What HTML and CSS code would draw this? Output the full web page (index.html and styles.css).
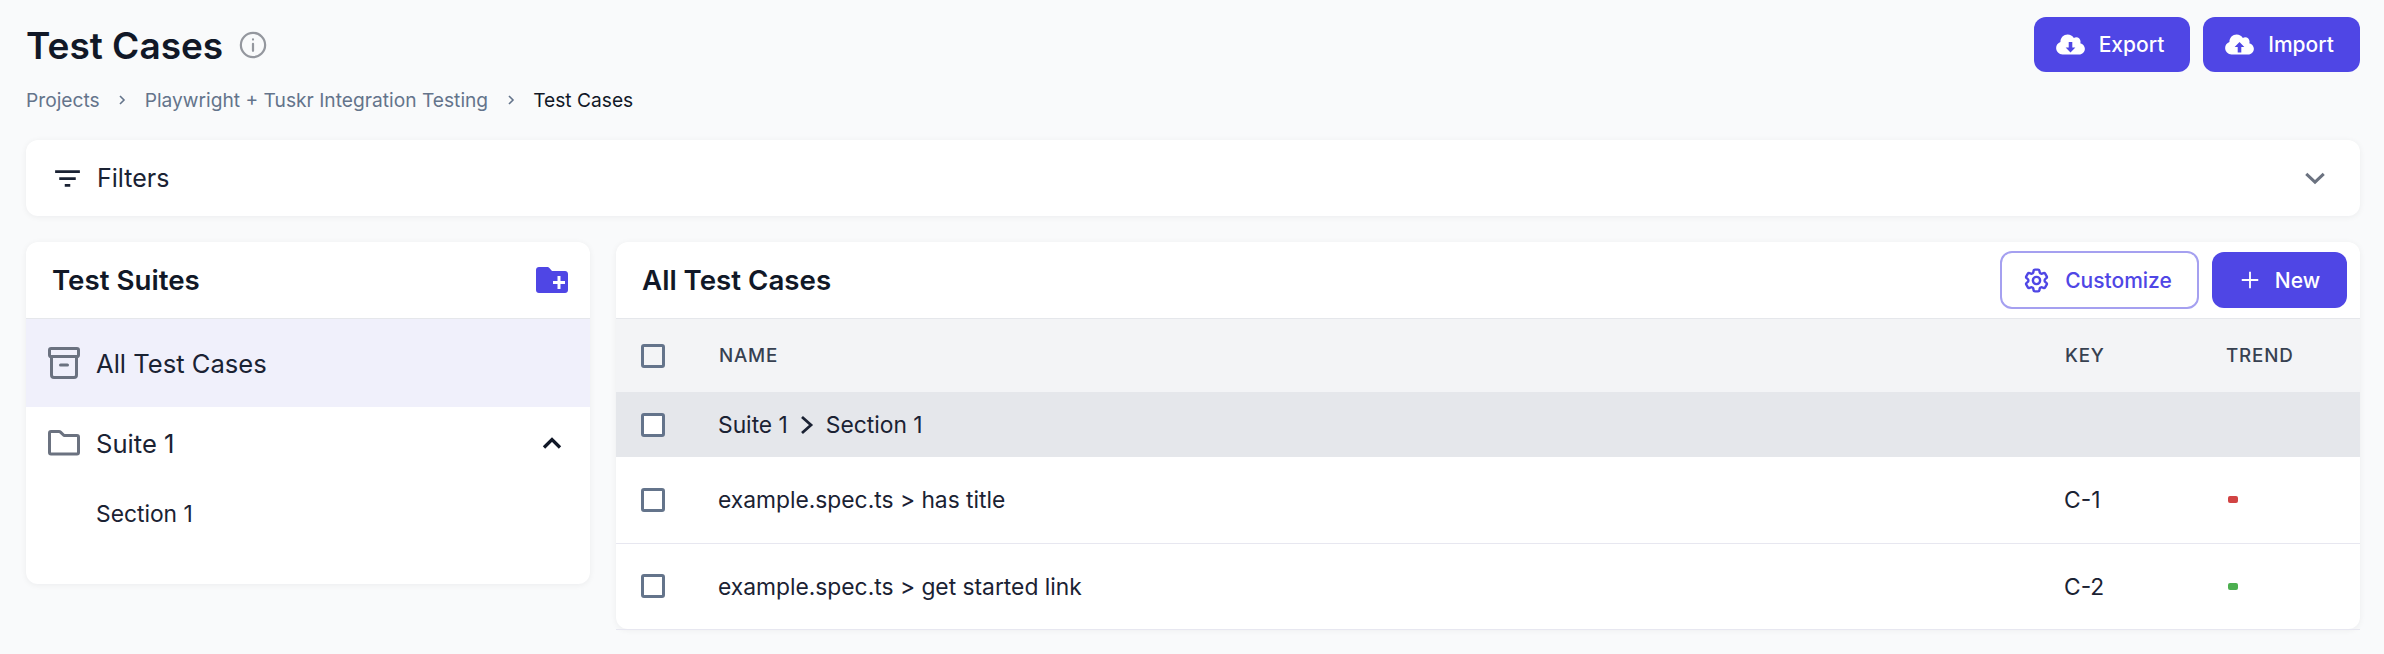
FILE: index.html
```html
<!DOCTYPE html>
<html lang="en">

<head>
    <meta charset="UTF-8">
    <title>Test Cases</title>
    <link rel="stylesheet" href="styles.css">
</head>

<body>

    <header class="page-header">
        <div>
            <div class="title-row">
                <h1>Test Cases</h1>
                <svg class="info-icon" viewBox="0 0 24 24" fill="none" stroke="currentColor" stroke-width="1.9" stroke-linecap="round"><circle cx="12" cy="12" r="10.4"/><path d="M12 11v6M12 7.2v.1"/></svg>
            </div>
            <nav class="breadcrumb">
                <span>Projects</span>
                <svg viewBox="0 0 20 20" fill="none" stroke="currentColor" stroke-width="1.6"><path d="M8 6l4 4-4 4"/></svg>
                <span>Playwright + Tuskr Integration Testing</span>
                <svg viewBox="0 0 20 20" fill="none" stroke="currentColor" stroke-width="1.6"><path d="M8 6l4 4-4 4"/></svg>
                <span class="current">Test Cases</span>
            </nav>
        </div>
        <div class="header-actions">
            <button class="btn btn-primary btn-large">
                <svg class="cloud-icon" viewBox="0 0 640 512" fill="currentColor"><path fill-rule="evenodd" d="M144 480C65 480 0 415 0 336c0-62 40-115 96-135-1-3 0-6 0-9C96 103 168 32 256 32c59 0 111 32 139 80 15-10 33-16 53-16 53 0 96 43 96 96 0 12-2 24-6 35 58 12 102 63 102 125 0 71-57 128-128 128H144zM280 200v124h-68l108 112 108-112h-68V200h-80z"/></svg>
                Export
            </button>
            <button class="btn btn-primary btn-large">
                <svg class="cloud-icon" viewBox="0 0 640 512" fill="currentColor"><path fill-rule="evenodd" d="M144 480C65 480 0 415 0 336c0-62 40-115 96-135-1-3 0-6 0-9C96 103 168 32 256 32c59 0 111 32 139 80 15-10 33-16 53-16 53 0 96 43 96 96 0 12-2 24-6 35 58 12 102 63 102 125 0 71-57 128-128 128H144zM360 436V312h68L320 200 212 312h68v124h80z"/></svg>
                Import
            </button>
        </div>
    </header>

    <section class="card filters">
        <div class="filters-label">
            <svg viewBox="0 0 24 24" fill="currentColor"><path d="M10 18h4v-2h-4v2zM3 6v2h18V6H3zm3 7h12v-2H6v2z"/></svg>
            Filters
        </div>
        <svg class="filters-chevron" viewBox="0 0 24 24" fill="none" stroke="currentColor" stroke-width="2.6"><path d="M4.500 8.500L12 15.500l7.500-7"/></svg>
    </section>

    <div class="columns">
        <aside class="card sidebar">
            <div class="card-head">
                <h2>Test Suites</h2>
                <svg class="add-folder" viewBox="0 0 32 26" fill="currentColor"><path fill-rule="evenodd" d="M3 0h8c1 0 2 .5 2.600 1.300L16 4h13c1.700 0 3 1.300 3 3v16c0 1.700-1.300 3-3 3H3c-1.700 0-3-1.300-3-3V3c0-1.700 1.300-3 3-3zm18.500 9v5H17v3h4.500v5h3v-5H29v-3h-4.500V9h-3z"/></svg>
            </div>
            <div class="suite-row suite-row-active">
                <svg class="suite-icon" viewBox="0 0 32 32" fill="none" stroke="currentColor" stroke-width="3" stroke-linejoin="round" stroke-linecap="round"><rect x="1.500" y="1.500" width="29" height="8" rx="1.600"/><path d="M3.500 9.500V28c0 1.500 1 2.500 2.500 2.500h20c1.500 0 2.500-1 2.500-2.500V9.500M12.500 18h7"/></svg>
                All Test Cases
            </div>
            <div class="suite-row">
                <svg class="suite-icon" viewBox="0 0 32 26" fill="none" stroke="currentColor" stroke-width="3" stroke-linejoin="round"><path d="M1.500 22.500V3c0-1 .5-1.500 1.500-1.500h8c.6 0 1.100.2 1.500.6L16 5.500h13c1 0 1.500.5 1.500 1.500v15.500c0 1-.5 1.500-1.500 1.500H3c-1 0-1.500-.5-1.500-1.500z"/></svg>
                <span class="suite-name">Suite 1</span>
                <svg class="suite-chevron" viewBox="0 0 24 24" fill="none" stroke="currentColor" stroke-width="3.300"><path d="M4 16.500L12 8.500l8 8"/></svg>
            </div>
            <div class="section-row">Section 1</div>
        </aside>

        <main class="card cases">
            <div class="card-head cases-head">
                <h2>All Test Cases</h2>
                <div class="head-actions">
                    <button class="btn btn-outline">
                        <svg viewBox="0 0 24 24" fill="none" stroke="currentColor" stroke-width="2" stroke-linecap="round" stroke-linejoin="round"><path d="M9.594 3.940c.090-.542.560-.940 1.110-.940h2.593c.550 0 1.020.398 1.110.940l.213 1.281c.063.374.313.686.645.870.074.040.147.083.220.127.324.196.720.257 1.075.124l1.217-.456a1.125 1.125 0 011.370.490l1.296 2.247a1.125 1.125 0 01-.260 1.431l-1.003.827c-.293.240-.438.613-.431.992a6.759 6.759 0 010 .255c-.007.378.138.750.430.990l1.005.828c.424.350.534.954.260 1.430l-1.298 2.247a1.125 1.125 0 01-1.369.491l-1.217-.456c-.355-.133-.750-.072-1.076.124a6.570 6.570 0 01-.220.128c-.331.183-.581.495-.644.869l-.213 1.280c-.090.543-.560.941-1.110.941h-2.594c-.550 0-1.020-.398-1.110-.940l-.213-1.281c-.062-.374-.312-.686-.644-.870a6.520 6.520 0 01-.220-.127c-.325-.196-.720-.257-1.076-.124l-1.217.456a1.125 1.125 0 01-1.369-.490l-1.297-2.247a1.125 1.125 0 01.260-1.431l1.004-.827c.292-.240.437-.613.430-.992a6.932 6.932 0 010-.255c.007-.378-.138-.750-.430-.990l-1.004-.828a1.125 1.125 0 01-.260-1.430l1.297-2.247a1.125 1.125 0 011.370-.491l1.216.456c.356.133.751.072 1.076-.124.072-.044.146-.087.220-.128.332-.183.582-.495.644-.869l.214-1.281z"/><circle cx="12" cy="12" r="3"/></svg>
                        Customize
                    </button>
                    <button class="btn btn-primary">
                        <svg viewBox="0 0 24 24" fill="none" stroke="currentColor" stroke-width="2"><path d="M12 3v18M3 12h18"/></svg>
                        <span>New</span>
                    </button>
                </div>
            </div>
            <table>
                <thead>
                    <tr>
                        <th class="col-check"><span class="checkbox"></span></th>
                        <th>NAME</th>
                        <th class="col-key">KEY</th>
                        <th class="col-trend">TREND</th>
                    </tr>
                </thead>
                <tbody>
                    <tr class="group-row">
                        <td class="col-check"><span class="checkbox"></span></td>
                        <td colspan="3">
                            <span class="group-path">
                                Suite 1
                                <svg viewBox="0 0 20 20" fill="none" stroke="currentColor" stroke-width="2.800"><path d="M5 2l9 8-9 8"/></svg>
                                Section 1
                            </span>
                        </td>
                    </tr>
                    <tr class="case-row">
                        <td class="col-check"><span class="checkbox"></span></td>
                        <td>example.spec.ts &gt; has title</td>
                        <td>C-1</td>
                        <td><span class="trend trend-fail"></span></td>
                    </tr>
                    <tr class="case-row">
                        <td class="col-check"><span class="checkbox"></span></td>
                        <td>example.spec.ts &gt; get started link</td>
                        <td>C-2</td>
                        <td><span class="trend trend-pass"></span></td>
                    </tr>
                </tbody>
            </table>
        </main>
    </div>

</body>

</html>
```

FILE: styles.css
```css
* {
    box-sizing: border-box;
}

body {
    font-family: Inter, "Liberation Sans", sans-serif;
    margin: 0;
    padding: 17px 24px 0 26px;
    height: 654px;
    overflow: hidden;
    background-color: #f9fafb;
    color: #1a2233;
}

h1,
h2 {
    margin: 0;
    color: #111827;
}

svg {
    display: block;
    flex-shrink: 0;
}

.page-header {
    display: flex;
    justify-content: space-between;
    height: 123px;
}

.title-row {
    display: flex;
    align-items: center;
    gap: 16px;
    height: 56px;
}

.title-row h1 {
    font-size: 37px;
    font-weight: 600;
}

.info-icon {
    width: 28px;
    height: 28px;
    color: #94979e;
}

.breadcrumb {
    display: flex;
    align-items: center;
    gap: 12.5px;
    margin-top: 15px;
    font-size: 19.2px;
    color: #64748b;
}

.breadcrumb svg {
    width: 20px;
    height: 20px;
}

.breadcrumb .current {
    color: #111827;
}

.header-actions {
    display: flex;
    gap: 13px;
}

.btn {
    display: flex;
    align-items: center;
    justify-content: center;
    font-family: inherit;
    font-size: 21px;
    font-weight: 500;
    border-radius: 12px;
    border: none;
    cursor: pointer;
}

.btn-primary {
    background-color: #4f46e5;
    color: white;
    height: 56px;
    width: 135px;
    gap: 14px;
}

.btn-primary svg {
    width: 22px;
    height: 22px;
}

.btn-large {
    width: 156px;
    height: 55px;
    gap: 14px;
    padding: 0 4px 0 0;
}

.btn-large + .btn-large {
    width: 157px;
}

.btn-primary .cloud-icon {
    width: 29px;
    height: 23px;
}

.btn-outline {
    background-color: white;
    color: #4f46e5;
    border: 2px solid #a5a0f0;
    height: 58px;
    width: 199px;
    gap: 14px;
    padding: 0 5px 0 0;
}

.btn-outline svg {
    width: 29px;
    height: 29px;
}

.card {
    background-color: white;
    border-radius: 12px;
    box-shadow: 0 1px 6px rgba(17, 24, 39, 0.06);
}

.filters {
    display: flex;
    align-items: center;
    justify-content: space-between;
    height: 76px;
    padding: 0 31px 0 25px;
}

.filters-label {
    display: flex;
    align-items: center;
    gap: 13px;
    font-size: 25px;
}

.filters-label svg {
    width: 33px;
    height: 33px;
}

.filters-chevron {
    width: 28px;
    height: 28px;
    color: #6b7280;
}

.columns {
    display: flex;
    align-items: flex-start;
    gap: 26px;
    margin-top: 26px;
}

.sidebar {
    width: 564px;
    height: 342px;
    flex-shrink: 0;
}

.card-head {
    display: flex;
    align-items: center;
    justify-content: space-between;
    height: 77px;
    padding: 0 22px 0 26px;
    border-bottom: 1px solid #e5e7eb;
}

.card-head h2 {
    font-size: 27.7px;
    font-weight: 600;
}

.add-folder {
    width: 32px;
    height: 26px;
    color: #4f46e5;
}

.suite-row {
    display: flex;
    align-items: center;
    gap: 16px;
    padding: 2px 26px 0 22px;
    height: 70px;
    font-size: 25.6px;
}

.suite-row-active {
    height: 88px;
    padding-top: 0;
    background-color: #f0f0fb;
}

.suite-icon {
    width: 32px;
    height: 32px;
    color: #6b7280;
}

.suite-name {
    flex: 1;
}

.suite-chevron {
    width: 24px;
    height: 24px;
    color: #111827;
}

.section-row {
    padding: 23px 0 0 70px;
    font-size: 22.8px;
}

.cases {
    flex: 1;
    height: 387px;
}

.cases-head {
    padding: 0 13px 0 26px;
}

.head-actions {
    display: flex;
    align-items: center;
    gap: 13px;
}

table {
    width: 100%;
    border-collapse: collapse;
    table-layout: fixed;
    font-size: 22.8px;
}

th {
    height: 73px;
    background-color: #f3f4f6;
    color: #374151;
    text-align: left;
    font-size: 18.8px;
    font-weight: 500;
    letter-spacing: 0.8px;
}

td {
    padding: 0;
}

.col-check {
    width: 102px;
    padding-left: 25px;
}

.col-key {
    width: 161px;
}

.col-trend {
    width: 135px;
}

.checkbox {
    display: block;
    width: 24px;
    height: 24px;
    border: 3px solid #64748b;
    border-radius: 3px;
    background-color: white;
}

thead .checkbox {
    background-color: transparent;
}

.group-row td {
    height: 65px;
    background-color: #e5e7eb;
}

.group-path {
    display: flex;
    align-items: center;
    gap: 9px;
}

.group-path svg {
    width: 20px;
    height: 20px;
}

.case-row td {
    height: 86px;
    border-bottom: 1px solid #e7e7f0;
}

.trend {
    display: block;
    width: 10px;
    height: 7px;
    margin-left: 3px;
    border-radius: 2px;
}

.trend-fail {
    background-color: #d14343;
}

.trend-pass {
    background-color: #4caf50;
}
```
